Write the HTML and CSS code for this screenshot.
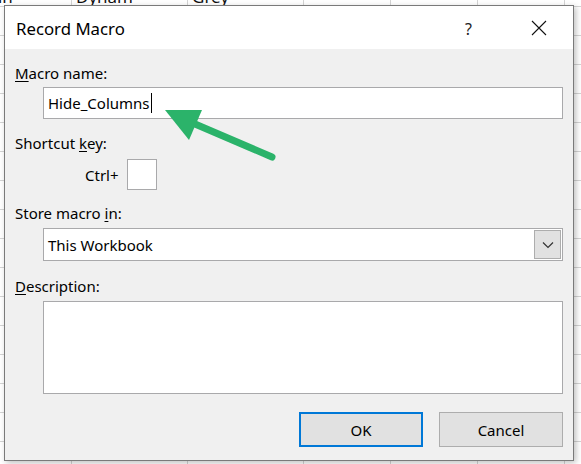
FILE: index.html
```html
<!DOCTYPE html>
<html>
<head>
<meta charset="utf-8">
<link rel="stylesheet" href="styles.css">
</head>
<body>
<div class="sheet">
  <div class="cols">
    <div class="col c1"><span class="cell">Inn</span></div>
    <div class="col c2"><span class="cell">Dynam</span></div>
    <div class="col c3"><span class="cell">Grey</span></div>
    <div class="col c4"></div>
    <div class="col c5"></div>
    <div class="col c6"></div>
  </div>
</div>
<div class="dialog">
  <div class="titlebar">
    <span class="title">Record Macro</span>
    <span class="help">?</span>
    <svg class="close" width="16" height="16" viewBox="0 0 16 16"><path d="M1 1 L15 15 M15 1 L1 15" stroke="#111" stroke-width="1.1" fill="none"/></svg>
  </div>
  <div class="body">
    <div class="label"><u>M</u>acro name:</div>
    <div class="field name"><span class="value">Hide_Columns</span><span class="caret"></span></div>
    <div class="label l2">Shortcut <u>k</u>ey:</div>
    <div class="shortcut"><span class="ctrl">Ctrl+</span><div class="keybox"></div></div>
    <div class="label l3">Store macro <u>i</u>n:</div>
    <div class="field combo"><span class="value">This Workbook</span>
      <div class="drop"><svg width="12" height="8" viewBox="0 0 12 8"><path d="M1 1.5 L6 6.5 L11 1.5" stroke="#333" stroke-width="1.2" fill="none"/></svg></div>
    </div>
    <div class="label l4"><u>D</u>escription:</div>
    <div class="field desc"></div>
    <div class="buttons">
      <div class="btn ok">OK</div>
      <div class="btn">Cancel</div>
    </div>
    <svg class="arrow" width="140" height="70" viewBox="0 0 140 70">
      <line x1="122" y1="63" x2="38" y2="27" stroke="#2bb36a" stroke-width="7" stroke-linecap="round"/>
      <polygon points="15,16 52,16 39,46" fill="#2bb36a"/>
    </svg>
  </div>
</div>
</body>
</html>
```

FILE: styles.css
```css
html, body {
  margin: 0;
  padding: 0;
}
body {
  width: 581px;
  height: 464px;
  overflow: hidden;
  position: relative;
  background: #ffffff;
  font-family: "Noto Sans", "Open Sans", sans-serif;
}
.sheet {
  height: 464px;
  background-image: repeating-linear-gradient(to bottom, transparent 0, transparent 6px, #d4d4d4 6px, #d4d4d4 7px, transparent 7px, transparent 29px);
  background-position: 0 0;
}
.cols {
  display: flex;
  height: 464px;
}
.col {
  border-right: 1px solid #d4d4d4;
  flex: none;
  position: relative;
  overflow: hidden;
}
.c1 { width: 71px; }
.c2 { width: 115px; }
.c3 { width: 115px; }
.c4 { width: 86px; }
.c5 { width: 86px; }
.c6 { width: 86px; }
.cell {
  display: block;
  margin-top: -13px;
  padding-left: 4px;
  font-size: 17px;
  line-height: 20px;
  color: #111;
}
.c1 .cell { padding-left: 0; margin-left: -14px; }
.dialog {
  position: absolute;
  left: 4px;
  top: 5px;
  width: 568px;
  height: 454px;
  border: 1px solid #7a7a7a;
  background: #f0f0f0;
  box-shadow: 2px 2px 6px rgba(0,0,0,0.25);
  display: flex;
  flex-direction: column;
}
.titlebar {
  height: 43px;
  background: #ffffff;
  display: flex;
  align-items: center;
  flex: none;
}
.title {
  margin-left: 11px;
  font-size: 16.8px;
  color: #000;
  flex: 1;
  margin-top: 2px;
}
.help {
  font-size: 16px;
  color: #222;
  margin-right: 59px;
  margin-top: 2px;
}
.close {
  margin-right: 26px;
  margin-top: 1px;
}
.body {
  position: relative;
  flex: 1;
  padding: 14px 10px 0 10px;
  display: flex;
  flex-direction: column;
}
.label {
  font-size: 15px;
  line-height: 20px;
  color: #000;
}
.label u {
  text-underline-offset: 2px;
  text-decoration-thickness: 1px;
}
.field {
  margin-left: 28px;
  background: #fff;
  border: 1px solid #a9a9ab;
  box-sizing: border-box;
  display: flex;
  align-items: center;
}
.value {
  font-size: 15px;
  color: #000;
  padding-left: 4px;
}
.name {
  margin-top: 4px;
  height: 32px;
}
.caret {
  width: 1px;
  height: 20px;
  background: #000;
  margin-left: 1px;
}
.l2 { margin-top: 14px; }
.shortcut {
  display: flex;
  align-items: center;
  margin-top: 6px;
  margin-left: 70px;
}
.ctrl {
  font-size: 15px;
  color: #000;
  margin-right: 8px;
}
.keybox {
  width: 30px;
  height: 31px;
  box-sizing: border-box;
  background: #fff;
  border: 1px solid #a9a9ab;
}
.l3 { margin-top: 13px; }
.combo {
  margin-top: 5px;
  height: 33px;
  justify-content: space-between;
  padding-right: 1px;
}
.drop {
  width: 27px;
  height: 29px;
  box-sizing: border-box;
  background: #e1e1e1;
  border: 1px solid #adadad;
  display: flex;
  align-items: center;
  justify-content: center;
}
.l4 { margin-top: 15px; }
.desc {
  margin-top: 5px;
  height: 93px;
}
.buttons {
  display: flex;
  justify-content: flex-end;
  gap: 16px;
  margin-top: 18px;
}
.btn {
  width: 124px;
  height: 35px;
  box-sizing: border-box;
  background: #e1e1e1;
  border: 1px solid #adadad;
  display: flex;
  align-items: center;
  justify-content: center;
  font-size: 15px;
  color: #000;
}
.btn.ok {
  border: 2px solid #0078d7;
}
.arrow {
  position: absolute;
  left: 145px;
  top: 45px;
}
```
